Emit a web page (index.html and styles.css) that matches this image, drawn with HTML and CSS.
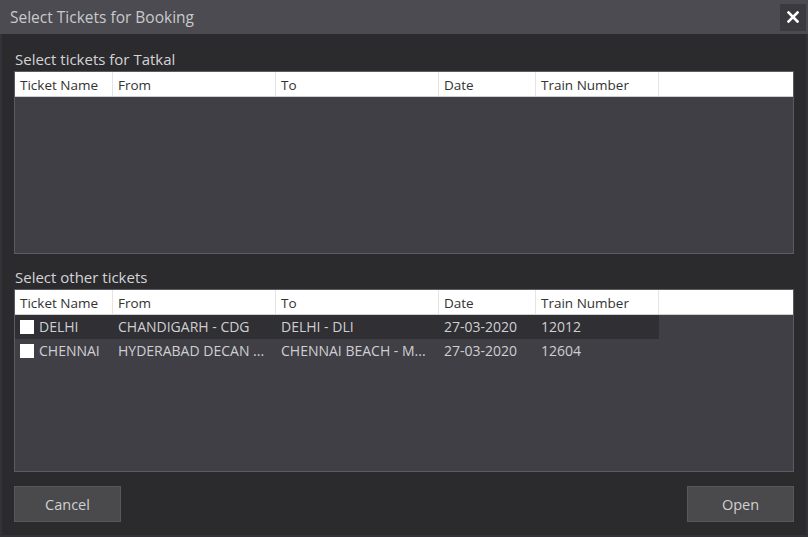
FILE: index.html
```html
<!DOCTYPE html>
<html>
<head>
<meta charset="utf-8">
<link rel="stylesheet" href="styles.css">
</head>
<body>
<div class="window">
  <div class="titlebar">
    <span class="title">Select Tickets for Booking</span>
    <button class="close" aria-label="Close">
      <svg width="12" height="12" viewBox="0 0 12 12"><path d="M1.5 1.5 L10.5 10.5 M10.5 1.5 L1.5 10.5" stroke="#ffffff" stroke-width="2.6" stroke-linecap="square"/></svg>
    </button>
  </div>
  <div class="content">
    <div class="section-label">Select tickets for Tatkal</div>
    <div class="grid">
      <div class="row head">
        <div class="cell c1">Ticket Name</div>
        <div class="cell c2">From</div>
        <div class="cell c3">To</div>
        <div class="cell c4">Date</div>
        <div class="cell c5">Train Number</div>
        <div class="cell fill"></div>
      </div>
    </div>
    <div class="section-label second">Select other tickets</div>
    <div class="grid">
      <div class="row head">
        <div class="cell c1">Ticket Name</div>
        <div class="cell c2">From</div>
        <div class="cell c3">To</div>
        <div class="cell c4">Date</div>
        <div class="cell c5">Train Number</div>
        <div class="cell fill"></div>
      </div>
      <div class="row data selected">
        <div class="cell c1"><span class="check"></span>DELHI</div>
        <div class="cell c2">CHANDIGARH - CDG</div>
        <div class="cell c3">DELHI - DLI</div>
        <div class="cell c4">27-03-2020</div>
        <div class="cell c5">12012</div>
      </div>
      <div class="row data">
        <div class="cell c1"><span class="check"></span>CHENNAI</div>
        <div class="cell c2">HYDERABAD DECAN ...</div>
        <div class="cell c3">CHENNAI BEACH - M...</div>
        <div class="cell c4">27-03-2020</div>
        <div class="cell c5">12604</div>
      </div>
    </div>
    <div class="buttons">
      <button class="btn">Cancel</button>
      <button class="btn">Open</button>
    </div>
  </div>
</div>
</body>
</html>
```
FILE: styles.css
```css
* { box-sizing: border-box; }
html, body { margin: 0; padding: 0; }
body {
  width: 808px;
  height: 537px;
  background: #2b2b2e;
  font-family: "Open Sans", "Noto Sans", sans-serif;
  color: #d2d2d2;
  overflow: hidden;
}
.window {
  width: 808px;
  height: 537px;
  display: flex;
  flex-direction: column;
  background: #2b2b2e;
  border-left: 2px solid #333337;
  border-right: 2px solid #333337;
  border-bottom: 2px solid #333337;
}
.titlebar {
  height: 34px;
  flex: none;
  display: flex;
  align-items: center;
  justify-content: space-between;
  background: #4b4b51;
  padding: 0 2px 0 10px;
  margin: 0 -2px;
}
.title {
  font-size: 15.5px;
  color: #c9c9cc;
}
.close {
  width: 26px;
  height: 27px;
  border: none;
  background: #3a3a3f;
  display: flex;
  align-items: center;
  justify-content: center;
  padding: 0;
}
.content {
  flex: 1;
  display: flex;
  flex-direction: column;
  padding: 0 12px 0 12px;
}
.section-label {
  font-size: 15px;
  color: #d4d4d6;
  height: 37px;
  padding-top: 15px;
  padding-left: 1px;
  line-height: 20px;
}
.section-label.second {
  height: 35px;
  padding-top: 13px;
}
.grid {
  height: 183px;
  background: #3f3f45;
  border: 1px solid #5b5b61;
  display: flex;
  flex-direction: column;
}
.row {
  display: flex;
  height: 24px;
  flex: none;
}
.row.head {
  background: #ffffff;
  color: #333333;
  height: 25px;
  border-bottom: 1px solid #cfcfcf;
}
.cell {
  font-size: 13.5px;
  line-height: 24px;
  padding-left: 5px;
  white-space: nowrap;
  overflow: hidden;
  display: flex;
  align-items: center;
}
.head .cell {
  border-right: 1px solid #e4e4e4;
  padding-top: 1px;
}
.head .cell.fill { border-right: none; flex: 1; }
.c1 { width: 98px; }
.c2 { width: 163px; }
.c3 { width: 163px; }
.c4 { width: 97px; }
.c5 { width: 123px; }
.data .cell { color: #cfcfd2; font-size: 14px; }
.row.selected { width: 644px; background: #2f2f34; }
.check {
  width: 14px;
  height: 14px;
  background: #ffffff;
  margin-right: 5px;
  flex: none;
}
.buttons {
  display: flex;
  justify-content: space-between;
  margin-top: 14px;
}
.btn {
  width: 107px;
  height: 36px;
  background: #4a4a4c;
  border: 1px solid #58585b;
  color: #d0d0d2;
  font-family: "Open Sans", "Noto Sans", sans-serif;
  font-size: 14.5px;
  padding: 0;
}
```
